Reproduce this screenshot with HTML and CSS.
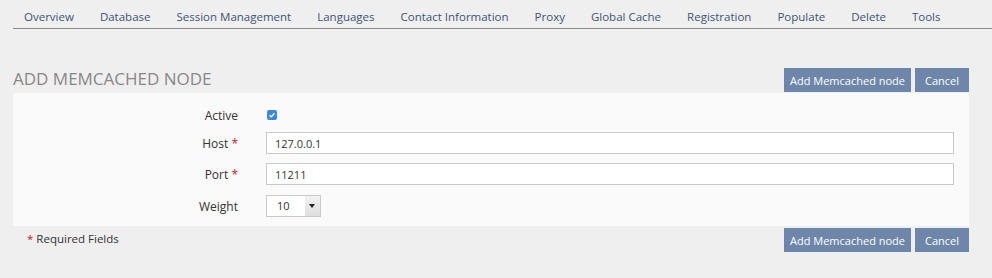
FILE: index.html
```html
<!DOCTYPE html>
<html lang="en">
<head>
  <meta charset="UTF-8">
  <title>Add Memcached Node</title>
  <link rel="stylesheet" href="styles.css">
</head>
<body>
  <!-- Tabs -->
  <nav class="tabs">
    <a href="#">Overview</a>
    <a href="#">Database</a>
    <a href="#">Session Management</a>
    <a href="#">Languages</a>
    <a href="#">Contact Information</a>
    <a href="#">Proxy</a>
    <a href="#">Global Cache</a>
    <a href="#">Registration</a>
    <a href="#">Populate</a>
    <a href="#">Delete</a>
    <a href="#">Tools</a>
  </nav>

  <div class="container">
    <div class="title-bar">
      <h2>Add Memcached Node</h2>
      <div class="actions">
        <button class="btn">Add Memcached node</button>
        <button class="btn btn-cancel">Cancel</button>
      </div>
    </div>

    <form class="panel">
      <div class="row row-check">
        <label>Active</label>
        <span class="checkbox">
          <svg width="10" height="10" viewBox="0 0 10 10"><rect width="10" height="10" rx="2" fill="#3d86e0"/><path d="M2.6 5.2 L4.3 6.9 L7.5 3.2" fill="none" stroke="#fff" stroke-width="1.3"/></svg>
        </span>
      </div>
      <div class="row">
        <label>Host <span class="req">*</span></label>
        <input type="text" value="127.0.0.1">
      </div>
      <div class="row">
        <label>Port <span class="req">*</span></label>
        <input type="text" value="11211">
      </div>
      <div class="row row-select">
        <label>Weight</label>
        <span class="select">
          <span class="select-value">10</span>
          <span class="select-arrow"></span>
        </span>
      </div>
    </form>

    <div class="footer-bar">
      <span class="required"><span class="req">*</span> Required Fields</span>
      <div class="actions">
        <button class="btn">Add Memcached node</button>
        <button class="btn btn-cancel">Cancel</button>
      </div>
    </div>
  </div>
</body>
</html>
```

FILE: styles.css
```css
/* General */
body {
  margin: 0;
  font-family: "Open Sans", Arial, sans-serif;
  font-size: 12px;
  color: #333;
  background: #efefef;
}

/* Tabs */
.tabs {
  display: flex;
  gap: 26px;
  height: 29px;
  margin-left: 13px;
  padding: 9px 0 0 11px;
  border-bottom: 1px solid #8c8c8c;
  box-sizing: border-box;
  white-space: nowrap;
}

.tabs a {
  color: #3d5478;
  text-decoration: none;
  font-size: 11.5px;
  line-height: 16px;
}

/* Content */
.container {
  margin: 0 23px 0 13px;
}

.title-bar {
  display: flex;
  justify-content: space-between;
  align-items: flex-end;
  margin-top: 39px;
  height: 24px;
}

.title-bar h2 {
  margin: 0;
  font-size: 17px;
  font-weight: normal;
  text-transform: uppercase;
  color: #888;
  line-height: 20px;
  padding-bottom: 3px;
}

.actions {
  display: flex;
  gap: 4px;
}

.btn {
  height: 24px;
  padding: 0 6px;
  border: none;
  background: #6d86aa;
  color: #fff;
  font-family: inherit;
  font-size: 11px;
  cursor: pointer;
}

.btn-cancel {
  min-width: 54px;
}

/* Form panel */
.panel {
  background: #fafafa;
  margin: 1px 0 0;
  padding: 12px 15px 9px 0;
}

.row {
  display: grid;
  grid-template-columns: 225px 1fr;
  column-gap: 28px;
  align-items: center;
  height: 22px;
}

.row + .row {
  margin-top: 9px;
}

.row-check {
  height: 20px;
}

.row-check + .row {
  margin-top: 7px;
}

.row + .row-select {
  margin-top: 10px;
}

.row label {
  text-align: right;
  font-size: 12px;
  color: #333;
}

.req {
  color: #c4161c;
}

.checkbox {
  display: flex;
  padding-left: 1px;
}

.row input {
  height: 22px;
  box-sizing: border-box;
  border: 1px solid #c9c9c9;
  background: #fff;
  padding: 0 8px;
  font-family: inherit;
  font-size: 11px;
  color: #333;
}

.select {
  display: flex;
  width: 55px;
  height: 22px;
  box-sizing: border-box;
  border: 1px solid #c9c9c9;
  background: #fff;
}

.select-value {
  flex: 1;
  padding-left: 10px;
  line-height: 20px;
  font-size: 11px;
}

.select-arrow {
  width: 15px;
  background: linear-gradient(#f2f2f2, #dedede);
  position: relative;
}

.select-arrow::after {
  content: "";
  position: absolute;
  left: 4px;
  top: 8px;
  border-left: 3px solid transparent;
  border-right: 3px solid transparent;
  border-top: 4px solid #222;
}

/* Footer */
.footer-bar {
  display: flex;
  justify-content: space-between;
  align-items: flex-start;
  margin-top: 2px;
}

.required {
  padding-left: 14px;
  padding-top: 3px;
  font-size: 11.5px;
}
```
